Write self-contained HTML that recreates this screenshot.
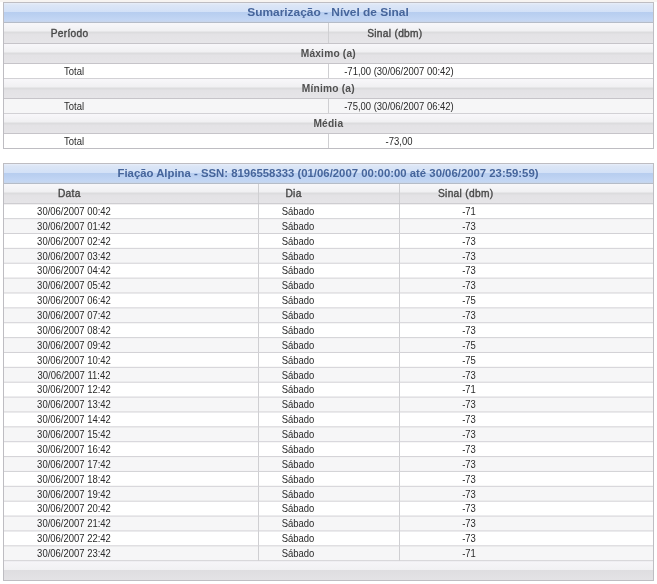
<!DOCTYPE html>
<html><head><meta charset="utf-8"><title>Sumarização - Nível de Sinal</title>
<style>
html,body{margin:0;padding:0;}
body{width:657px;height:584px;overflow:hidden;background:#fff;position:relative;font-family:"Liberation Sans", sans-serif;}
#w{position:absolute;left:0;top:0;width:657px;height:584px;filter:blur(0.45px);}
#w>div{position:absolute;}
.t{text-align:center;white-space:nowrap;}
</style></head><body><div id="w">
<div style="left:0px;top:0px;width:657px;height:2px;background:#f7f4f1"></div>
<div style="left:3px;top:2px;width:651px;height:147px;border:1px solid #bebdc2;box-sizing:border-box;background:#fff"></div>
<div style="left:4px;top:3px;width:649px;height:19px;background:linear-gradient(to bottom,#e8eef9 0px,#dce6f6 2px,#d3e1f7 8.5px,#b7cdef 9px,#b9cff0 11px,#c3d6f4 17px,#c8d5ea 19px)"></div>
<div style="left:4px;top:22px;width:649px;height:1px;background:#b5bcc8"></div>
<div class="t" style="left:-71.75px;top:6.91px;width:800px;font-size:11.8px;line-height:11.8px;font-weight:bold;color:#46659b;letter-spacing:0px;transform:scaleX(1.01)">Sumarização - Nível de Sinal</div>
<div style="left:4px;top:23px;width:649px;height:20px;background:linear-gradient(to bottom,#f8f7fa 0px,#f0f0f2 8px,#dcdcde 9px,#dcdcde 10px,#e3e2e5 11px,#e6e5e8 100%)"></div>
<div style="left:4px;top:43px;width:649px;height:1px;background:#c6c4c9"></div>
<div style="left:328px;top:23px;width:1px;height:20px;background:#cfcfd2"></div>
<div class="t" style="left:-330.45px;top:28.67px;width:800px;font-size:10.2px;line-height:10.2px;font-weight:normal;color:#474747;letter-spacing:0.3px;-webkit-text-stroke:0.35px">Período</div>
<div class="t" style="left:-5.15px;top:28.67px;width:800px;font-size:10.2px;line-height:10.2px;font-weight:normal;color:#474747;letter-spacing:0.3px;-webkit-text-stroke:0.35px">Sinal (dbm)</div>
<div style="left:4px;top:44px;width:649px;height:19px;background:linear-gradient(to bottom,#f8f7fa 0px,#f0f0f2 8px,#dcdcde 9px,#dcdcde 10px,#e3e2e5 11px,#e6e5e8 100%)"></div>
<div style="left:4px;top:63px;width:649px;height:1px;background:#c6c4c9"></div>
<div class="t" style="left:-71.70px;top:48.97px;width:800px;font-size:10.2px;line-height:10.2px;font-weight:bold;color:#505050;letter-spacing:0.2px;">Máximo (a)</div>
<div style="left:4px;top:64px;width:649px;height:14px;background:#fff"></div>
<div style="left:4px;top:78px;width:649px;height:1px;background:#d2d1d5"></div>
<div style="left:328px;top:64px;width:1px;height:14px;background:#cfcfd2"></div>
<div class="t" style="left:-326.50px;top:67.07px;width:800px;font-size:10.2px;line-height:10.2px;font-weight:normal;color:#2a2a2a;letter-spacing:0px;transform:scaleX(0.93)">Total</div>
<div class="t" style="left:-1.20px;top:67.07px;width:800px;font-size:10.2px;line-height:10.2px;font-weight:normal;color:#2a2a2a;letter-spacing:0px;transform:scaleX(0.93)">-71,00 (30/06/2007 00:42)</div>
<div style="left:4px;top:79px;width:649px;height:19px;background:linear-gradient(to bottom,#f8f7fa 0px,#f0f0f2 8px,#dcdcde 9px,#dcdcde 10px,#e3e2e5 11px,#e6e5e8 100%)"></div>
<div style="left:4px;top:98px;width:649px;height:1px;background:#c6c4c9"></div>
<div class="t" style="left:-71.70px;top:83.97px;width:800px;font-size:10.2px;line-height:10.2px;font-weight:bold;color:#505050;letter-spacing:0.2px;">Mínimo (a)</div>
<div style="left:4px;top:99px;width:649px;height:14px;background:#f6f6f7"></div>
<div style="left:4px;top:113px;width:649px;height:1px;background:#d2d1d5"></div>
<div style="left:328px;top:99px;width:1px;height:14px;background:#cfcfd2"></div>
<div class="t" style="left:-326.50px;top:102.07px;width:800px;font-size:10.2px;line-height:10.2px;font-weight:normal;color:#2a2a2a;letter-spacing:0px;transform:scaleX(0.93)">Total</div>
<div class="t" style="left:-1.20px;top:102.07px;width:800px;font-size:10.2px;line-height:10.2px;font-weight:normal;color:#2a2a2a;letter-spacing:0px;transform:scaleX(0.93)">-75,00 (30/06/2007 06:42)</div>
<div style="left:4px;top:114px;width:649px;height:19px;background:linear-gradient(to bottom,#f8f7fa 0px,#f0f0f2 8px,#dcdcde 9px,#dcdcde 10px,#e3e2e5 11px,#e6e5e8 100%)"></div>
<div style="left:4px;top:133px;width:649px;height:1px;background:#c6c4c9"></div>
<div class="t" style="left:-71.70px;top:118.97px;width:800px;font-size:10.2px;line-height:10.2px;font-weight:bold;color:#505050;letter-spacing:0.2px;">Média</div>
<div style="left:4px;top:134px;width:649px;height:14px;background:#fff"></div>
<div style="left:328px;top:134px;width:1px;height:14px;background:#cfcfd2"></div>
<div class="t" style="left:-326.50px;top:137.07px;width:800px;font-size:10.2px;line-height:10.2px;font-weight:normal;color:#2a2a2a;letter-spacing:0px;transform:scaleX(0.93)">Total</div>
<div class="t" style="left:-1.20px;top:137.07px;width:800px;font-size:10.2px;line-height:10.2px;font-weight:normal;color:#2a2a2a;letter-spacing:0px;transform:scaleX(0.93)">-73,00</div>
<div style="left:3px;top:163px;width:651px;height:418px;border:1px solid #bebdc2;box-sizing:border-box;background:#fff"></div>
<div style="left:4px;top:164px;width:649px;height:19px;background:linear-gradient(to bottom,#e8eef9 0px,#dce6f6 2px,#d3e1f7 8.5px,#b7cdef 9px,#b9cff0 11px,#c3d6f4 17px,#c8d5ea 19px)"></div>
<div style="left:4px;top:183px;width:649px;height:1px;background:#b5bcc8"></div>
<div class="t" style="left:-71.95px;top:167.61px;width:800px;font-size:11.8px;line-height:11.8px;font-weight:bold;color:#46659b;letter-spacing:0px;transform:scaleX(0.962)">Fiação Alpina - SSN: 8196558333 (01/06/2007 00:00:00 até 30/06/2007 23:59:59)</div>
<div style="left:4px;top:184px;width:649px;height:20px;background:linear-gradient(to bottom,#f8f7fa 0px,#f0f0f2 8px,#dcdcde 9px,#dcdcde 10px,#e3e2e5 11px,#e6e5e8 100%)"></div>
<div style="left:4px;top:204px;width:649px;height:15px;background:#fff"></div>
<div style="left:4px;top:219px;width:649px;height:14px;background:#f6f6f7"></div>
<div style="left:4px;top:233px;width:649px;height:15px;background:#fff"></div>
<div style="left:4px;top:248px;width:649px;height:15px;background:#f6f6f7"></div>
<div style="left:4px;top:263px;width:649px;height:15px;background:#fff"></div>
<div style="left:4px;top:278px;width:649px;height:15px;background:#f6f6f7"></div>
<div style="left:4px;top:293px;width:649px;height:15px;background:#fff"></div>
<div style="left:4px;top:308px;width:649px;height:15px;background:#f6f6f7"></div>
<div style="left:4px;top:323px;width:649px;height:15px;background:#fff"></div>
<div style="left:4px;top:338px;width:649px;height:14px;background:#f6f6f7"></div>
<div style="left:4px;top:352px;width:649px;height:15px;background:#fff"></div>
<div style="left:4px;top:367px;width:649px;height:15px;background:#f6f6f7"></div>
<div style="left:4px;top:382px;width:649px;height:15px;background:#fff"></div>
<div style="left:4px;top:397px;width:649px;height:15px;background:#f6f6f7"></div>
<div style="left:4px;top:412px;width:649px;height:15px;background:#fff"></div>
<div style="left:4px;top:427px;width:649px;height:15px;background:#f6f6f7"></div>
<div style="left:4px;top:442px;width:649px;height:15px;background:#fff"></div>
<div style="left:4px;top:457px;width:649px;height:14px;background:#f6f6f7"></div>
<div style="left:4px;top:471px;width:649px;height:15px;background:#fff"></div>
<div style="left:4px;top:486px;width:649px;height:15px;background:#f6f6f7"></div>
<div style="left:4px;top:501px;width:649px;height:15px;background:#fff"></div>
<div style="left:4px;top:516px;width:649px;height:15px;background:#f6f6f7"></div>
<div style="left:4px;top:531px;width:649px;height:15px;background:#fff"></div>
<div style="left:4px;top:546px;width:649px;height:15px;background:#f6f6f7"></div>
<div style="left:4px;top:561px;width:649px;height:19px;background:linear-gradient(to bottom,#f6f5f8 0px,#f1f1f3 9px,#dedde0 9px,#e3e2e5 100%)"></div>
<div style="left:258px;top:184px;width:1px;height:377px;background:#cfcfd2"></div>
<div style="left:399px;top:184px;width:1px;height:377px;background:#cfcfd2"></div>
<div style="left:4px;top:203px;width:649px;height:1px;background:#c6c4c9;opacity:0.750"></div>
<div style="left:4px;top:204px;width:649px;height:1px;background:#c6c4c9;opacity:0.250"></div>
<div style="left:4px;top:218px;width:649px;height:1px;background:#d2d1d5;opacity:0.878"></div>
<div style="left:4px;top:219px;width:649px;height:1px;background:#d2d1d5;opacity:0.122"></div>
<div style="left:4px;top:233px;width:649px;height:1px;background:#d2d1d5;opacity:0.994"></div>
<div style="left:4px;top:247px;width:649px;height:1px;background:#d2d1d5;opacity:0.134"></div>
<div style="left:4px;top:248px;width:649px;height:1px;background:#d2d1d5;opacity:0.866"></div>
<div style="left:4px;top:262px;width:649px;height:1px;background:#d2d1d5;opacity:0.262"></div>
<div style="left:4px;top:263px;width:649px;height:1px;background:#d2d1d5;opacity:0.738"></div>
<div style="left:4px;top:277px;width:649px;height:1px;background:#d2d1d5;opacity:0.390"></div>
<div style="left:4px;top:278px;width:649px;height:1px;background:#d2d1d5;opacity:0.610"></div>
<div style="left:4px;top:292px;width:649px;height:1px;background:#d2d1d5;opacity:0.518"></div>
<div style="left:4px;top:293px;width:649px;height:1px;background:#d2d1d5;opacity:0.482"></div>
<div style="left:4px;top:307px;width:649px;height:1px;background:#d2d1d5;opacity:0.646"></div>
<div style="left:4px;top:308px;width:649px;height:1px;background:#d2d1d5;opacity:0.354"></div>
<div style="left:4px;top:322px;width:649px;height:1px;background:#d2d1d5;opacity:0.774"></div>
<div style="left:4px;top:323px;width:649px;height:1px;background:#d2d1d5;opacity:0.226"></div>
<div style="left:4px;top:337px;width:649px;height:1px;background:#d2d1d5;opacity:0.902"></div>
<div style="left:4px;top:338px;width:649px;height:1px;background:#d2d1d5;opacity:0.098"></div>
<div style="left:4px;top:351px;width:649px;height:1px;background:#d2d1d5;opacity:0.030"></div>
<div style="left:4px;top:352px;width:649px;height:1px;background:#d2d1d5;opacity:0.970"></div>
<div style="left:4px;top:366px;width:649px;height:1px;background:#d2d1d5;opacity:0.158"></div>
<div style="left:4px;top:367px;width:649px;height:1px;background:#d2d1d5;opacity:0.842"></div>
<div style="left:4px;top:381px;width:649px;height:1px;background:#d2d1d5;opacity:0.286"></div>
<div style="left:4px;top:382px;width:649px;height:1px;background:#d2d1d5;opacity:0.714"></div>
<div style="left:4px;top:396px;width:649px;height:1px;background:#d2d1d5;opacity:0.414"></div>
<div style="left:4px;top:397px;width:649px;height:1px;background:#d2d1d5;opacity:0.586"></div>
<div style="left:4px;top:411px;width:649px;height:1px;background:#d2d1d5;opacity:0.542"></div>
<div style="left:4px;top:412px;width:649px;height:1px;background:#d2d1d5;opacity:0.458"></div>
<div style="left:4px;top:426px;width:649px;height:1px;background:#d2d1d5;opacity:0.670"></div>
<div style="left:4px;top:427px;width:649px;height:1px;background:#d2d1d5;opacity:0.330"></div>
<div style="left:4px;top:441px;width:649px;height:1px;background:#d2d1d5;opacity:0.798"></div>
<div style="left:4px;top:442px;width:649px;height:1px;background:#d2d1d5;opacity:0.202"></div>
<div style="left:4px;top:456px;width:649px;height:1px;background:#d2d1d5;opacity:0.926"></div>
<div style="left:4px;top:457px;width:649px;height:1px;background:#d2d1d5;opacity:0.074"></div>
<div style="left:4px;top:470px;width:649px;height:1px;background:#d2d1d5;opacity:0.054"></div>
<div style="left:4px;top:471px;width:649px;height:1px;background:#d2d1d5;opacity:0.946"></div>
<div style="left:4px;top:485px;width:649px;height:1px;background:#d2d1d5;opacity:0.182"></div>
<div style="left:4px;top:486px;width:649px;height:1px;background:#d2d1d5;opacity:0.818"></div>
<div style="left:4px;top:500px;width:649px;height:1px;background:#d2d1d5;opacity:0.310"></div>
<div style="left:4px;top:501px;width:649px;height:1px;background:#d2d1d5;opacity:0.690"></div>
<div style="left:4px;top:515px;width:649px;height:1px;background:#d2d1d5;opacity:0.438"></div>
<div style="left:4px;top:516px;width:649px;height:1px;background:#d2d1d5;opacity:0.562"></div>
<div style="left:4px;top:530px;width:649px;height:1px;background:#d2d1d5;opacity:0.566"></div>
<div style="left:4px;top:531px;width:649px;height:1px;background:#d2d1d5;opacity:0.434"></div>
<div style="left:4px;top:545px;width:649px;height:1px;background:#d2d1d5;opacity:0.694"></div>
<div style="left:4px;top:546px;width:649px;height:1px;background:#d2d1d5;opacity:0.306"></div>
<div style="left:4px;top:560px;width:649px;height:1px;background:#d2d1d5;opacity:0.822"></div>
<div style="left:4px;top:561px;width:649px;height:1px;background:#d2d1d5;opacity:0.178"></div>
<div class="t" style="left:-330.70px;top:189.37px;width:800px;font-size:10.2px;line-height:10.2px;font-weight:normal;color:#474747;letter-spacing:0.3px;-webkit-text-stroke:0.35px">Data</div>
<div class="t" style="left:-106.50px;top:189.37px;width:800px;font-size:10.2px;line-height:10.2px;font-weight:normal;color:#474747;letter-spacing:0.3px;-webkit-text-stroke:0.35px">Dia</div>
<div class="t" style="left:65.70px;top:189.37px;width:800px;font-size:10.2px;line-height:10.2px;font-weight:normal;color:#474747;letter-spacing:0.3px;-webkit-text-stroke:0.35px">Sinal (dbm)</div>
<div class="t" style="left:-326.40px;top:206.97px;width:800px;font-size:10.2px;line-height:10.2px;font-weight:normal;color:#2a2a2a;letter-spacing:0px;transform:scaleX(0.93)">30/06/2007 00:42</div>
<div class="t" style="left:-102.50px;top:206.97px;width:800px;font-size:10.2px;line-height:10.2px;font-weight:normal;color:#2a2a2a;letter-spacing:0px;transform:scaleX(0.93)">Sábado</div>
<div class="t" style="left:69.00px;top:206.97px;width:800px;font-size:10.2px;line-height:10.2px;font-weight:normal;color:#2a2a2a;letter-spacing:0px;transform:scaleX(0.93)">-71</div>
<div class="t" style="left:-326.40px;top:221.84px;width:800px;font-size:10.2px;line-height:10.2px;font-weight:normal;color:#2a2a2a;letter-spacing:0px;transform:scaleX(0.93)">30/06/2007 01:42</div>
<div class="t" style="left:-102.50px;top:221.84px;width:800px;font-size:10.2px;line-height:10.2px;font-weight:normal;color:#2a2a2a;letter-spacing:0px;transform:scaleX(0.93)">Sábado</div>
<div class="t" style="left:69.00px;top:221.84px;width:800px;font-size:10.2px;line-height:10.2px;font-weight:normal;color:#2a2a2a;letter-spacing:0px;transform:scaleX(0.93)">-73</div>
<div class="t" style="left:-326.40px;top:236.71px;width:800px;font-size:10.2px;line-height:10.2px;font-weight:normal;color:#2a2a2a;letter-spacing:0px;transform:scaleX(0.93)">30/06/2007 02:42</div>
<div class="t" style="left:-102.50px;top:236.71px;width:800px;font-size:10.2px;line-height:10.2px;font-weight:normal;color:#2a2a2a;letter-spacing:0px;transform:scaleX(0.93)">Sábado</div>
<div class="t" style="left:69.00px;top:236.71px;width:800px;font-size:10.2px;line-height:10.2px;font-weight:normal;color:#2a2a2a;letter-spacing:0px;transform:scaleX(0.93)">-73</div>
<div class="t" style="left:-326.40px;top:251.58px;width:800px;font-size:10.2px;line-height:10.2px;font-weight:normal;color:#2a2a2a;letter-spacing:0px;transform:scaleX(0.93)">30/06/2007 03:42</div>
<div class="t" style="left:-102.50px;top:251.58px;width:800px;font-size:10.2px;line-height:10.2px;font-weight:normal;color:#2a2a2a;letter-spacing:0px;transform:scaleX(0.93)">Sábado</div>
<div class="t" style="left:69.00px;top:251.58px;width:800px;font-size:10.2px;line-height:10.2px;font-weight:normal;color:#2a2a2a;letter-spacing:0px;transform:scaleX(0.93)">-73</div>
<div class="t" style="left:-326.40px;top:266.45px;width:800px;font-size:10.2px;line-height:10.2px;font-weight:normal;color:#2a2a2a;letter-spacing:0px;transform:scaleX(0.93)">30/06/2007 04:42</div>
<div class="t" style="left:-102.50px;top:266.45px;width:800px;font-size:10.2px;line-height:10.2px;font-weight:normal;color:#2a2a2a;letter-spacing:0px;transform:scaleX(0.93)">Sábado</div>
<div class="t" style="left:69.00px;top:266.45px;width:800px;font-size:10.2px;line-height:10.2px;font-weight:normal;color:#2a2a2a;letter-spacing:0px;transform:scaleX(0.93)">-73</div>
<div class="t" style="left:-326.40px;top:281.33px;width:800px;font-size:10.2px;line-height:10.2px;font-weight:normal;color:#2a2a2a;letter-spacing:0px;transform:scaleX(0.93)">30/06/2007 05:42</div>
<div class="t" style="left:-102.50px;top:281.33px;width:800px;font-size:10.2px;line-height:10.2px;font-weight:normal;color:#2a2a2a;letter-spacing:0px;transform:scaleX(0.93)">Sábado</div>
<div class="t" style="left:69.00px;top:281.33px;width:800px;font-size:10.2px;line-height:10.2px;font-weight:normal;color:#2a2a2a;letter-spacing:0px;transform:scaleX(0.93)">-73</div>
<div class="t" style="left:-326.40px;top:296.20px;width:800px;font-size:10.2px;line-height:10.2px;font-weight:normal;color:#2a2a2a;letter-spacing:0px;transform:scaleX(0.93)">30/06/2007 06:42</div>
<div class="t" style="left:-102.50px;top:296.20px;width:800px;font-size:10.2px;line-height:10.2px;font-weight:normal;color:#2a2a2a;letter-spacing:0px;transform:scaleX(0.93)">Sábado</div>
<div class="t" style="left:69.00px;top:296.20px;width:800px;font-size:10.2px;line-height:10.2px;font-weight:normal;color:#2a2a2a;letter-spacing:0px;transform:scaleX(0.93)">-75</div>
<div class="t" style="left:-326.40px;top:311.07px;width:800px;font-size:10.2px;line-height:10.2px;font-weight:normal;color:#2a2a2a;letter-spacing:0px;transform:scaleX(0.93)">30/06/2007 07:42</div>
<div class="t" style="left:-102.50px;top:311.07px;width:800px;font-size:10.2px;line-height:10.2px;font-weight:normal;color:#2a2a2a;letter-spacing:0px;transform:scaleX(0.93)">Sábado</div>
<div class="t" style="left:69.00px;top:311.07px;width:800px;font-size:10.2px;line-height:10.2px;font-weight:normal;color:#2a2a2a;letter-spacing:0px;transform:scaleX(0.93)">-73</div>
<div class="t" style="left:-326.40px;top:325.94px;width:800px;font-size:10.2px;line-height:10.2px;font-weight:normal;color:#2a2a2a;letter-spacing:0px;transform:scaleX(0.93)">30/06/2007 08:42</div>
<div class="t" style="left:-102.50px;top:325.94px;width:800px;font-size:10.2px;line-height:10.2px;font-weight:normal;color:#2a2a2a;letter-spacing:0px;transform:scaleX(0.93)">Sábado</div>
<div class="t" style="left:69.00px;top:325.94px;width:800px;font-size:10.2px;line-height:10.2px;font-weight:normal;color:#2a2a2a;letter-spacing:0px;transform:scaleX(0.93)">-73</div>
<div class="t" style="left:-326.40px;top:340.81px;width:800px;font-size:10.2px;line-height:10.2px;font-weight:normal;color:#2a2a2a;letter-spacing:0px;transform:scaleX(0.93)">30/06/2007 09:42</div>
<div class="t" style="left:-102.50px;top:340.81px;width:800px;font-size:10.2px;line-height:10.2px;font-weight:normal;color:#2a2a2a;letter-spacing:0px;transform:scaleX(0.93)">Sábado</div>
<div class="t" style="left:69.00px;top:340.81px;width:800px;font-size:10.2px;line-height:10.2px;font-weight:normal;color:#2a2a2a;letter-spacing:0px;transform:scaleX(0.93)">-75</div>
<div class="t" style="left:-326.40px;top:355.69px;width:800px;font-size:10.2px;line-height:10.2px;font-weight:normal;color:#2a2a2a;letter-spacing:0px;transform:scaleX(0.93)">30/06/2007 10:42</div>
<div class="t" style="left:-102.50px;top:355.69px;width:800px;font-size:10.2px;line-height:10.2px;font-weight:normal;color:#2a2a2a;letter-spacing:0px;transform:scaleX(0.93)">Sábado</div>
<div class="t" style="left:69.00px;top:355.69px;width:800px;font-size:10.2px;line-height:10.2px;font-weight:normal;color:#2a2a2a;letter-spacing:0px;transform:scaleX(0.93)">-75</div>
<div class="t" style="left:-326.40px;top:370.56px;width:800px;font-size:10.2px;line-height:10.2px;font-weight:normal;color:#2a2a2a;letter-spacing:0px;transform:scaleX(0.93)">30/06/2007 11:42</div>
<div class="t" style="left:-102.50px;top:370.56px;width:800px;font-size:10.2px;line-height:10.2px;font-weight:normal;color:#2a2a2a;letter-spacing:0px;transform:scaleX(0.93)">Sábado</div>
<div class="t" style="left:69.00px;top:370.56px;width:800px;font-size:10.2px;line-height:10.2px;font-weight:normal;color:#2a2a2a;letter-spacing:0px;transform:scaleX(0.93)">-73</div>
<div class="t" style="left:-326.40px;top:385.43px;width:800px;font-size:10.2px;line-height:10.2px;font-weight:normal;color:#2a2a2a;letter-spacing:0px;transform:scaleX(0.93)">30/06/2007 12:42</div>
<div class="t" style="left:-102.50px;top:385.43px;width:800px;font-size:10.2px;line-height:10.2px;font-weight:normal;color:#2a2a2a;letter-spacing:0px;transform:scaleX(0.93)">Sábado</div>
<div class="t" style="left:69.00px;top:385.43px;width:800px;font-size:10.2px;line-height:10.2px;font-weight:normal;color:#2a2a2a;letter-spacing:0px;transform:scaleX(0.93)">-71</div>
<div class="t" style="left:-326.40px;top:400.30px;width:800px;font-size:10.2px;line-height:10.2px;font-weight:normal;color:#2a2a2a;letter-spacing:0px;transform:scaleX(0.93)">30/06/2007 13:42</div>
<div class="t" style="left:-102.50px;top:400.30px;width:800px;font-size:10.2px;line-height:10.2px;font-weight:normal;color:#2a2a2a;letter-spacing:0px;transform:scaleX(0.93)">Sábado</div>
<div class="t" style="left:69.00px;top:400.30px;width:800px;font-size:10.2px;line-height:10.2px;font-weight:normal;color:#2a2a2a;letter-spacing:0px;transform:scaleX(0.93)">-73</div>
<div class="t" style="left:-326.40px;top:415.17px;width:800px;font-size:10.2px;line-height:10.2px;font-weight:normal;color:#2a2a2a;letter-spacing:0px;transform:scaleX(0.93)">30/06/2007 14:42</div>
<div class="t" style="left:-102.50px;top:415.17px;width:800px;font-size:10.2px;line-height:10.2px;font-weight:normal;color:#2a2a2a;letter-spacing:0px;transform:scaleX(0.93)">Sábado</div>
<div class="t" style="left:69.00px;top:415.17px;width:800px;font-size:10.2px;line-height:10.2px;font-weight:normal;color:#2a2a2a;letter-spacing:0px;transform:scaleX(0.93)">-73</div>
<div class="t" style="left:-326.40px;top:430.05px;width:800px;font-size:10.2px;line-height:10.2px;font-weight:normal;color:#2a2a2a;letter-spacing:0px;transform:scaleX(0.93)">30/06/2007 15:42</div>
<div class="t" style="left:-102.50px;top:430.05px;width:800px;font-size:10.2px;line-height:10.2px;font-weight:normal;color:#2a2a2a;letter-spacing:0px;transform:scaleX(0.93)">Sábado</div>
<div class="t" style="left:69.00px;top:430.05px;width:800px;font-size:10.2px;line-height:10.2px;font-weight:normal;color:#2a2a2a;letter-spacing:0px;transform:scaleX(0.93)">-73</div>
<div class="t" style="left:-326.40px;top:444.92px;width:800px;font-size:10.2px;line-height:10.2px;font-weight:normal;color:#2a2a2a;letter-spacing:0px;transform:scaleX(0.93)">30/06/2007 16:42</div>
<div class="t" style="left:-102.50px;top:444.92px;width:800px;font-size:10.2px;line-height:10.2px;font-weight:normal;color:#2a2a2a;letter-spacing:0px;transform:scaleX(0.93)">Sábado</div>
<div class="t" style="left:69.00px;top:444.92px;width:800px;font-size:10.2px;line-height:10.2px;font-weight:normal;color:#2a2a2a;letter-spacing:0px;transform:scaleX(0.93)">-73</div>
<div class="t" style="left:-326.40px;top:459.79px;width:800px;font-size:10.2px;line-height:10.2px;font-weight:normal;color:#2a2a2a;letter-spacing:0px;transform:scaleX(0.93)">30/06/2007 17:42</div>
<div class="t" style="left:-102.50px;top:459.79px;width:800px;font-size:10.2px;line-height:10.2px;font-weight:normal;color:#2a2a2a;letter-spacing:0px;transform:scaleX(0.93)">Sábado</div>
<div class="t" style="left:69.00px;top:459.79px;width:800px;font-size:10.2px;line-height:10.2px;font-weight:normal;color:#2a2a2a;letter-spacing:0px;transform:scaleX(0.93)">-73</div>
<div class="t" style="left:-326.40px;top:474.66px;width:800px;font-size:10.2px;line-height:10.2px;font-weight:normal;color:#2a2a2a;letter-spacing:0px;transform:scaleX(0.93)">30/06/2007 18:42</div>
<div class="t" style="left:-102.50px;top:474.66px;width:800px;font-size:10.2px;line-height:10.2px;font-weight:normal;color:#2a2a2a;letter-spacing:0px;transform:scaleX(0.93)">Sábado</div>
<div class="t" style="left:69.00px;top:474.66px;width:800px;font-size:10.2px;line-height:10.2px;font-weight:normal;color:#2a2a2a;letter-spacing:0px;transform:scaleX(0.93)">-73</div>
<div class="t" style="left:-326.40px;top:489.53px;width:800px;font-size:10.2px;line-height:10.2px;font-weight:normal;color:#2a2a2a;letter-spacing:0px;transform:scaleX(0.93)">30/06/2007 19:42</div>
<div class="t" style="left:-102.50px;top:489.53px;width:800px;font-size:10.2px;line-height:10.2px;font-weight:normal;color:#2a2a2a;letter-spacing:0px;transform:scaleX(0.93)">Sábado</div>
<div class="t" style="left:69.00px;top:489.53px;width:800px;font-size:10.2px;line-height:10.2px;font-weight:normal;color:#2a2a2a;letter-spacing:0px;transform:scaleX(0.93)">-73</div>
<div class="t" style="left:-326.40px;top:504.41px;width:800px;font-size:10.2px;line-height:10.2px;font-weight:normal;color:#2a2a2a;letter-spacing:0px;transform:scaleX(0.93)">30/06/2007 20:42</div>
<div class="t" style="left:-102.50px;top:504.41px;width:800px;font-size:10.2px;line-height:10.2px;font-weight:normal;color:#2a2a2a;letter-spacing:0px;transform:scaleX(0.93)">Sábado</div>
<div class="t" style="left:69.00px;top:504.41px;width:800px;font-size:10.2px;line-height:10.2px;font-weight:normal;color:#2a2a2a;letter-spacing:0px;transform:scaleX(0.93)">-73</div>
<div class="t" style="left:-326.40px;top:519.28px;width:800px;font-size:10.2px;line-height:10.2px;font-weight:normal;color:#2a2a2a;letter-spacing:0px;transform:scaleX(0.93)">30/06/2007 21:42</div>
<div class="t" style="left:-102.50px;top:519.28px;width:800px;font-size:10.2px;line-height:10.2px;font-weight:normal;color:#2a2a2a;letter-spacing:0px;transform:scaleX(0.93)">Sábado</div>
<div class="t" style="left:69.00px;top:519.28px;width:800px;font-size:10.2px;line-height:10.2px;font-weight:normal;color:#2a2a2a;letter-spacing:0px;transform:scaleX(0.93)">-73</div>
<div class="t" style="left:-326.40px;top:534.15px;width:800px;font-size:10.2px;line-height:10.2px;font-weight:normal;color:#2a2a2a;letter-spacing:0px;transform:scaleX(0.93)">30/06/2007 22:42</div>
<div class="t" style="left:-102.50px;top:534.15px;width:800px;font-size:10.2px;line-height:10.2px;font-weight:normal;color:#2a2a2a;letter-spacing:0px;transform:scaleX(0.93)">Sábado</div>
<div class="t" style="left:69.00px;top:534.15px;width:800px;font-size:10.2px;line-height:10.2px;font-weight:normal;color:#2a2a2a;letter-spacing:0px;transform:scaleX(0.93)">-73</div>
<div class="t" style="left:-326.40px;top:549.02px;width:800px;font-size:10.2px;line-height:10.2px;font-weight:normal;color:#2a2a2a;letter-spacing:0px;transform:scaleX(0.93)">30/06/2007 23:42</div>
<div class="t" style="left:-102.50px;top:549.02px;width:800px;font-size:10.2px;line-height:10.2px;font-weight:normal;color:#2a2a2a;letter-spacing:0px;transform:scaleX(0.93)">Sábado</div>
<div class="t" style="left:69.00px;top:549.02px;width:800px;font-size:10.2px;line-height:10.2px;font-weight:normal;color:#2a2a2a;letter-spacing:0px;transform:scaleX(0.93)">-71</div>
</div></body></html>
